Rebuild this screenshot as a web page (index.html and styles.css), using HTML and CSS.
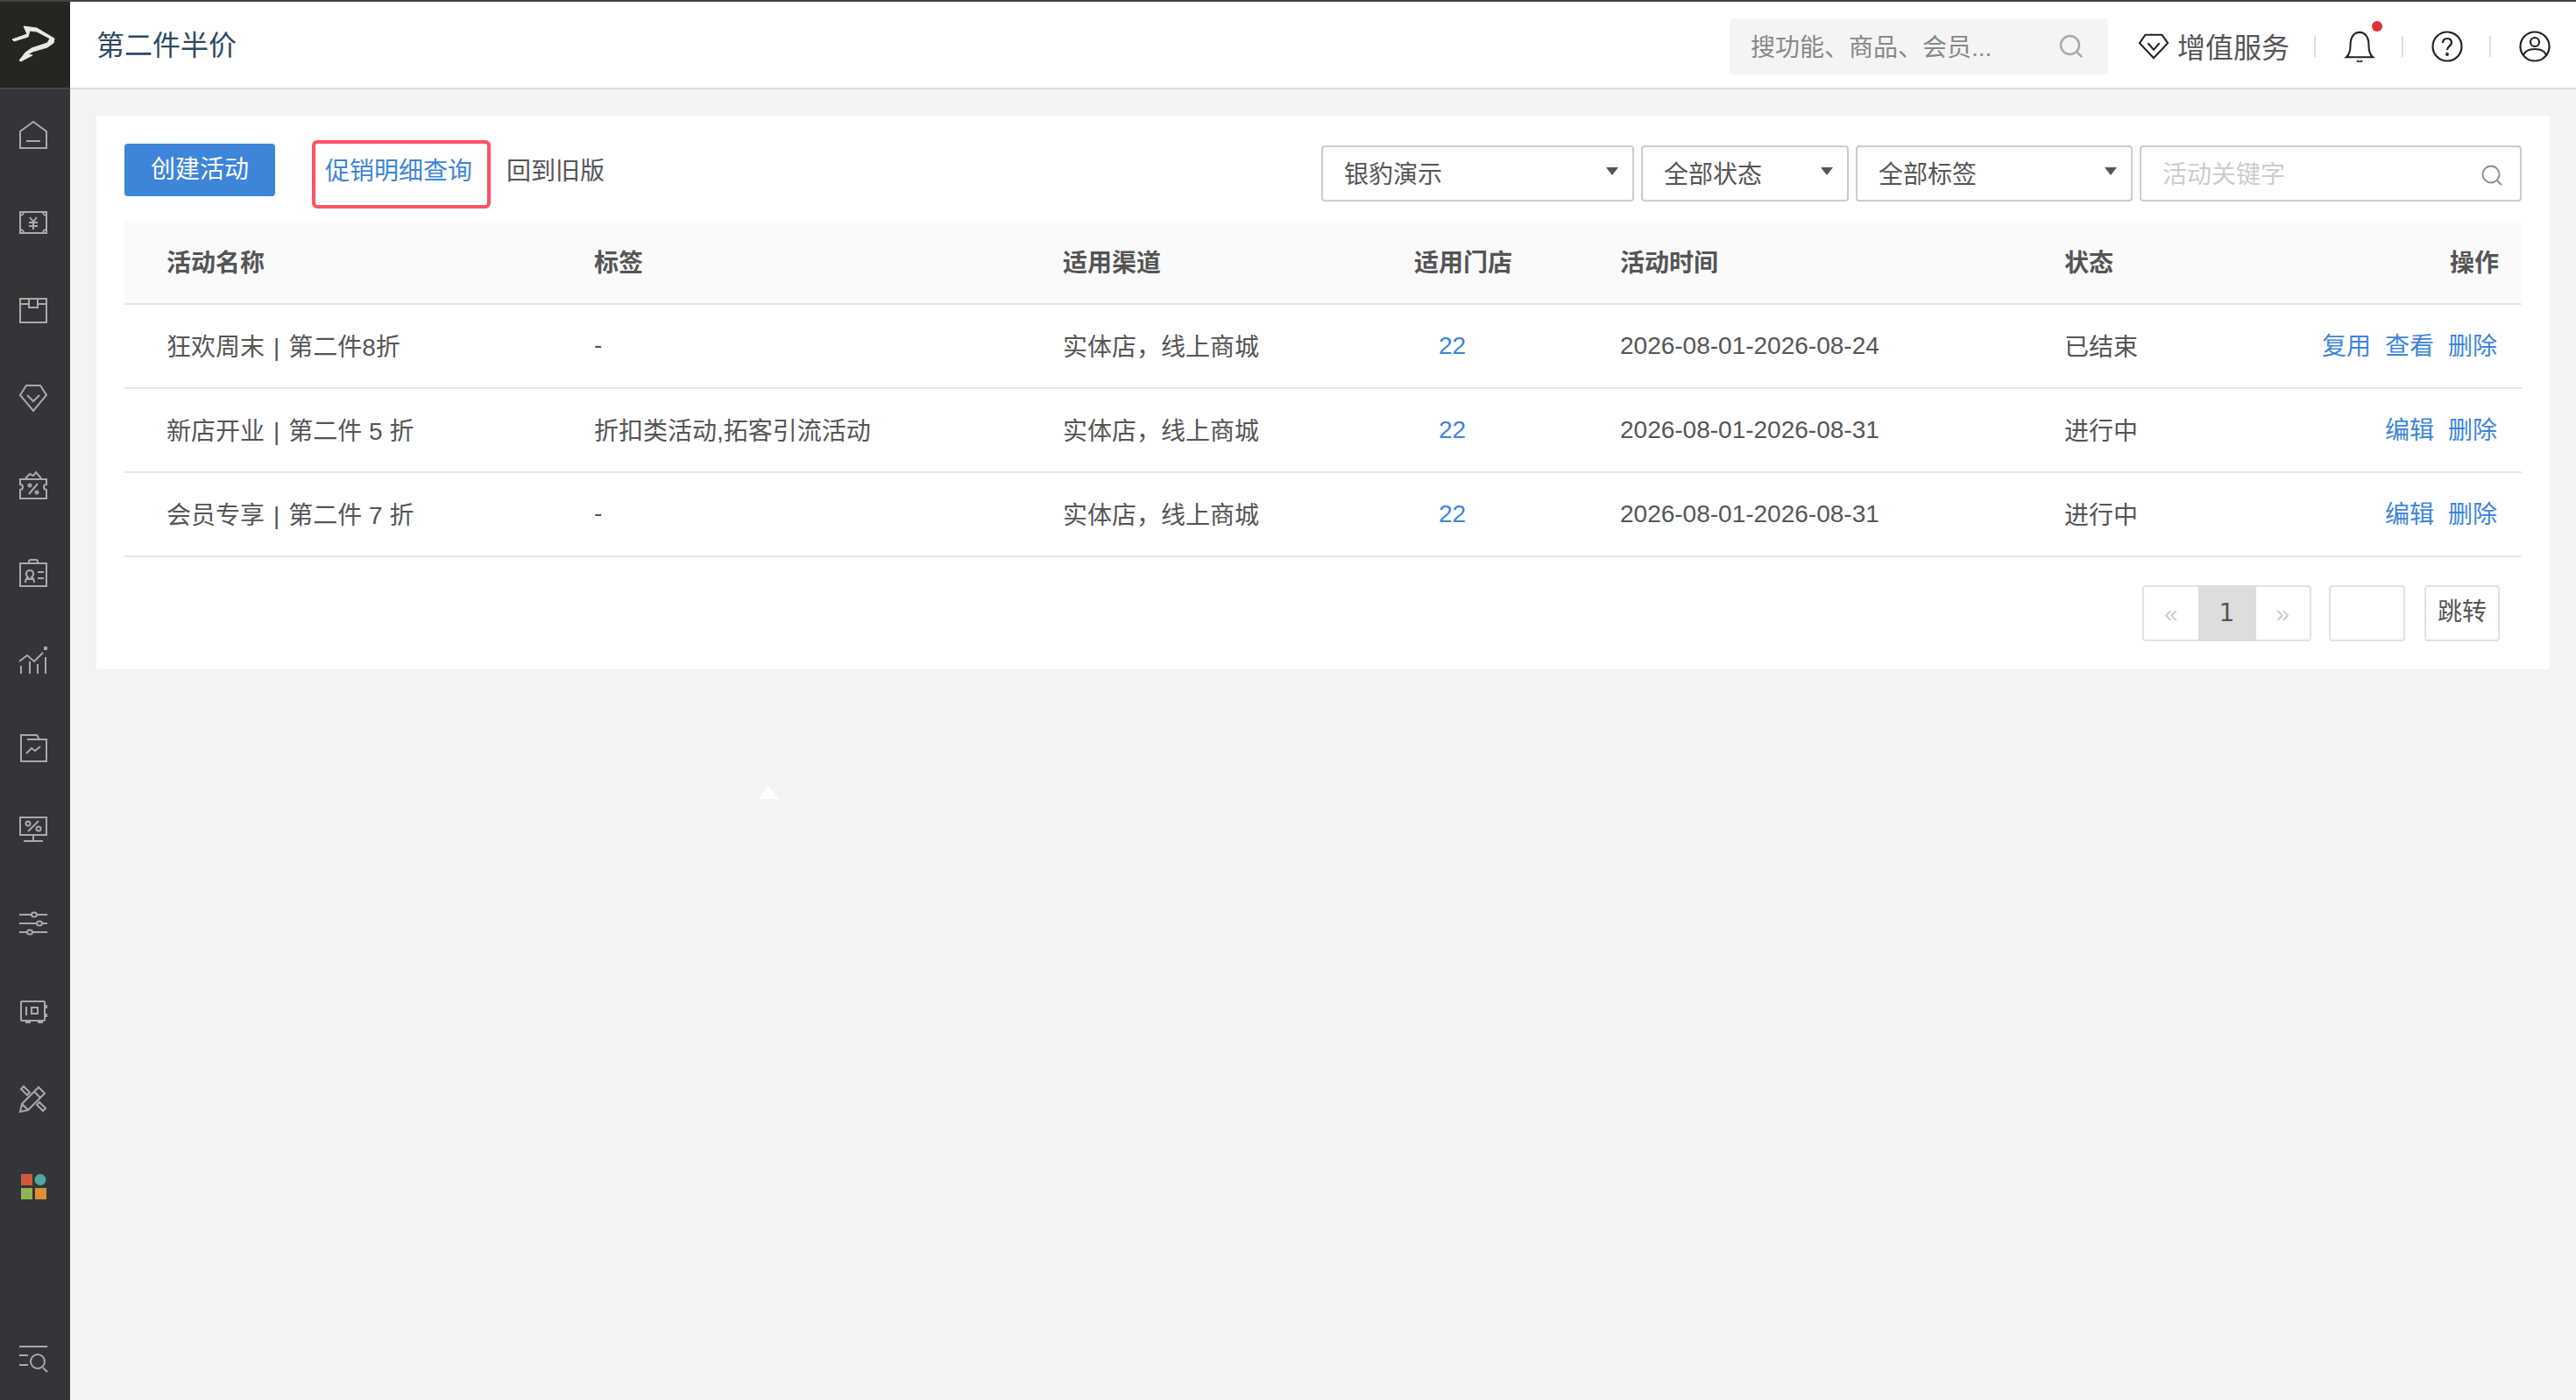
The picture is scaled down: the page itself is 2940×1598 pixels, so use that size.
FILE: index.html
```html
<!DOCTYPE html>
<html lang="zh-CN">
<head>
  <meta charset="UTF-8">
  <meta name="viewport" content="width=device-width, initial-scale=1.0">
  <title>第二件半价</title>
  <link rel="stylesheet" href="styles.css">
</head>
<body>
  <div class="app">
    <!-- left icon rail -->
    <aside class="sidebar">
      <div class="logo">
        <svg width="52" height="44" viewBox="14 32 52 44"><path d="M15 48 L32 42 L28 33 L43 35 L63 47 L62 52 L55 57 L38 62 L33 65 L38 66 L25 73 L23 72 L30 63 L37 58 L55 52 L58 47 L43 39 L35 38 L33 45 L17 50 Z" fill="#e8e8e8" stroke="#e8e8e8"/></svg>
      </div>
      <a class="nav-item"><svg class="side-ico" viewBox="0 0 32 32"><path d="M1 31V12L16 1l15 11v19zM8 23h16"/></svg></a>
      <a class="nav-item"><svg class="side-ico" viewBox="0 0 32 32"><path d="M1 4h30v24H1zM1 8a4 4 0 0 0 4-4M27 4a4 4 0 0 0 4 4M1 24a4 4 0 0 1 4 4M31 24a4 4 0 0 0-4 4"/><path d="M12 10l4 5 4-5M11 16h10M11 20h10M16 15v9"/></svg></a>
      <a class="nav-item"><svg class="side-ico" viewBox="0 0 32 32"><path d="M1 3h30v27H1zM1 9h10M21 9h10M11 3v10h10V3"/></svg></a>
      <a class="nav-item"><svg class="side-ico" viewBox="0 0 32 32"><path d="M8 2h16l7 11-15 18L1 13zM9 13l7 7 7-7"/></svg></a>
      <a class="nav-item"><svg class="side-ico" viewBox="0 0 32 32"><path d="M1 9h30v6a3 3 0 0 0 0 6v10H1V21a3 3 0 0 0 0-6zM7 8l5-5 4 2 3-4 6 7M21 14L11 26"/><circle cx="12" cy="16" r="1.5"/><circle cx="20" cy="24" r="1.5"/></svg></a>
      <a class="nav-item"><svg class="side-ico" viewBox="0 0 32 32"><path d="M1 5h30v26H1zM11 5V3a2 2 0 0 1 2-2h6a2 2 0 0 1 2 2v2zM21 15h7M21 22h7M7 27c0-4 1-5 3-6-4-3-2-8 2-8s6 5 2 8c2 1 3 2 3 6M7 23h10"/></svg></a>
      <a class="nav-item"><svg class="side-ico" viewBox="0 0 32 32"><path d="M2 31V22M12 31V17M21 31V20M30 31V12M0 17l9-7 8 7 10-10"/><rect x="28" y="0" width="4" height="4" fill="#aaa" stroke="none"/></svg></a>
      <a class="nav-item"><svg class="side-ico" viewBox="0 0 32 32"><path d="M2 1h18l3 5h8v25H2zM9 6h14M8 22l6-6 4 3 6-5"/></svg></a>
      <a class="nav-item nav-item-monitor"><svg class="side-ico" viewBox="0 0 32 32"><path d="M1 1h30v20H1zM16 21v6M5 28h22M22 5L10 17"/><circle cx="10" cy="8" r="2.5"/><circle cx="22" cy="14" r="2.5"/></svg></a>
      <a class="nav-item"><svg class="side-ico" viewBox="0 0 32 32"><path d="M0 6h14M20 6h12M0 16h20M26 16h6M0 26h9M15 26h17"/><ellipse cx="17" cy="6" rx="3" ry="2.5"/><ellipse cx="23" cy="16" rx="3" ry="2.5"/><ellipse cx="12" cy="26" rx="3" ry="2.5"/></svg></a>
      <a class="nav-item"><svg class="side-ico" viewBox="0 0 32 32"><path d="M3 5h25a1 1 0 0 1 1 1v20a1 1 0 0 1-1 1H3a1 1 0 0 1-1-1V6a1 1 0 0 1 1-1zM31 9v4M31 19v4M8 27v2h5M21 29h5v-2M8 11v10"/><rect x="14" y="12" width="7" height="7"/></svg></a>
      <a class="nav-item"><svg class="side-ico" viewBox="0 0 32 32"><path d="M1 31l2-9L22 3l7 7-19 19zM3 22l7 7M17 8l7 7M5 2L2 5l7 7 3-3zM23 20l-3 3 7 7 3-3z"/></svg></a>
      <a class="nav-item"><svg class="tiles" viewBox="0 0 32 32"><rect x="2" y="2" width="13" height="13" fill="#d0593a"/><ellipse cx="24" cy="8.5" rx="6.5" ry="6.5" fill="#4fa89c"/><rect x="2" y="18" width="13" height="13" fill="#8cb553"/><rect x="18" y="18" width="13" height="13" fill="#dd9033"/></svg></a>
      <a class="nav-item nav-item-bottom"><svg class="side-ico" viewBox="0 0 32 32"><path d="M0 2h32M0 12h10M0 23h10M27 26l5 5"/><circle cx="21" cy="19" r="8"/></svg></a>
    </aside>

    <div class="main">
      <header class="topbar">
        <div class="page-title">第二件半价</div>
        <div class="top-search">
          <span>搜功能、商品、会员...</span>
          <svg class="top-search-ico" viewBox="0 0 28 28"><circle cx="12.5" cy="12.5" r="10.5"/><path d="M20 20l6 6"/></svg>
        </div>
        <div class="vip">
          <svg class="top-ico" viewBox="0 0 38 32"><path d="M9 2h20l7 10-17 18L2 12zM12 12l7 8 7-8"/></svg>
          <span>增值服务</span>
        </div>
        <i class="sep sep-first"></i>
        <div class="bell">
          <svg class="top-ico" viewBox="0 0 36 38"><path d="M2 32c4-3 5-8 5-15 0-10 5-15 11-15s11 5 11 15c0 7 1 12 5 15zM15 36c1 2 5 2 6 0"/></svg>
          <b class="dot"></b>
        </div>
        <i class="sep"></i>
        <svg class="top-ico" viewBox="0 0 36 36"><circle cx="18" cy="18" r="16.5"/><path d="M13 14c0-3 2-5 5-5s5 2 5 5-5 4-5 8"/><circle cx="18" cy="27" r=".8"/></svg>
        <i class="sep"></i>
        <svg class="top-ico" viewBox="0 0 36 36"><circle cx="18" cy="18" r="16.5"/><circle cx="18" cy="13" r="5"/><path d="M5 28c2-6 8-7 13-7s11 1 13 7"/></svg>
      </header>

      <div class="content">
        <section class="card">
          <div class="toolbar">
            <a class="btn-primary">创建活动</a>
            <a class="link-boxed">促销明细查询</a>
            <a class="link-old">回到旧版</a>
            <div class="filters">
              <div class="select select-shop"><span>银豹演示</span><i class="caret"></i></div>
              <div class="select select-status"><span>全部状态</span><i class="caret"></i></div>
              <div class="select select-tag"><span>全部标签</span><i class="caret"></i></div>
              <div class="select select-key"><span class="placeholder">活动关键字</span>
                <svg class="key-ico" viewBox="0 0 24 24"><circle cx="11" cy="11" r="9.5"/><path d="M18 18l5 5"/></svg>
              </div>
            </div>
          </div>

          <table class="promo-table">
            <thead>
              <tr>
                <th class="col-name">活动名称</th>
                <th class="col-tag">标签</th>
                <th class="col-channel">适用渠道</th>
                <th class="col-store">适用门店</th>
                <th class="col-time">活动时间</th>
                <th class="col-status">状态</th>
                <th class="col-ops">操作</th>
              </tr>
            </thead>
            <tbody>
              <tr>
                <td>狂欢周末<span class="bar">|</span>第二件8折</td>
                <td>-</td>
                <td>实体店，线上商城</td>
                <td class="num store-num"><a>22</a></td>
                <td class="num">2026-08-01-2026-08-24</td>
                <td>已结束</td>
                <td class="ops"><a>复用</a><a>查看</a><a>删除</a></td>
              </tr>
              <tr>
                <td>新店开业<span class="bar">|</span>第二件 5 折</td>
                <td>折扣类活动,拓客引流活动</td>
                <td>实体店，线上商城</td>
                <td class="num store-num"><a>22</a></td>
                <td class="num">2026-08-01-2026-08-31</td>
                <td>进行中</td>
                <td class="ops"><a>编辑</a><a>删除</a></td>
              </tr>
              <tr>
                <td>会员专享<span class="bar">|</span>第二件 7 折</td>
                <td>-</td>
                <td>实体店，线上商城</td>
                <td class="num store-num"><a>22</a></td>
                <td class="num">2026-08-01-2026-08-31</td>
                <td>进行中</td>
                <td class="ops"><a>编辑</a><a>删除</a></td>
              </tr>
            </tbody>
          </table>

          <div class="pager">
            <div class="pages">
              <span class="page-arrow page-prev">«</span>
              <span class="page-current">1</span>
              <span class="page-arrow page-next">»</span>
            </div>
            <div class="jump-input"></div>
            <a class="jump-btn">跳转</a>
          </div>
        </section>
      </div>
    </div>
  </div>
  <div class="tip-arrow"></div>
</body>
</html>
```

FILE: styles.css
```css
* {
  box-sizing: border-box;
}
html, body {
  height: 100%;
}
body {
  margin: 0;
  background-color: #f3f3f3;
  border-top: 2px solid #444;
  color: #555;
  font-family: "Liberation Sans", "Noto Sans CJK SC", sans-serif;
  font-size: 28px;
  overflow: hidden;
}
a {
  cursor: pointer;
}
.app {
  display: flex;
  height: 100%;
}

/* sidebar */
.sidebar {
  width: 80px;
  flex: none;
  display: flex;
  flex-direction: column;
  background-color: #333538;
}
.logo {
  height: 100px;
  flex: none;
  display: flex;
  align-items: center;
  justify-content: center;
  padding-right: 2px;
  background-color: #262522;
  border-bottom: 2px solid #45474a;
  margin-bottom: 2px;
}
.nav-item {
  height: 100px;
  flex: none;
  display: flex;
  align-items: center;
  justify-content: center;
  padding-right: 4px;
}
.nav-item-monitor {
  padding-bottom: 12px;
}
.nav-item-bottom {
  margin-top: auto;
  height: 94px;
}
.side-ico {
  width: 32px;
  height: 32px;
  fill: none;
  stroke: #aaa;
  stroke-width: 2;
  overflow: visible;
}
.tiles {
  width: 32px;
  height: 32px;
}

/* header */
.main {
  flex: 1;
  display: flex;
  flex-direction: column;
  min-width: 0;
}
.topbar {
  height: 100px;
  flex: none;
  display: flex;
  align-items: center;
  padding-right: 29px;
  background-color: #fff;
  border-bottom: 2px solid #ddd;
}
.page-title {
  margin-left: 30px;
  margin-right: auto;
  padding-bottom: 4px;
  font-size: 32px;
  color: #2d4a63;
}
.top-search {
  width: 432px;
  height: 64px;
  margin-top: 4px;
  display: flex;
  align-items: center;
  justify-content: space-between;
  padding: 0 28px 3px 24px;
  background-color: #f4f4f4;
  border-radius: 4px;
  color: #888;
}
.top-search-ico {
  width: 28px;
  height: 28px;
  margin-top: 3px;
  fill: none;
  stroke: #aaa;
  stroke-width: 2.5;
}
.vip {
  display: flex;
  align-items: center;
  margin-left: 34px;
  font-size: 32px;
  margin-top: 1px;
}
.top-ico {
  width: 36px;
  height: 36px;
  margin-top: 4px;
  fill: none;
  stroke: #222;
  stroke-width: 2.2;
}
.vip .top-ico {
  margin: 3px 9px 0 0;
}
.sep {
  width: 2px;
  height: 24px;
  margin: 4px 32px 0 30px;
  background-color: #ddd;
}
.sep-first {
  margin-left: 28px;
}
.bell {
  position: relative;
  display: flex;
}
.dot {
  position: absolute;
  top: -7px;
  right: -8px;
  width: 12px;
  height: 12px;
  border-radius: 50%;
  background-color: #e03131;
}

/* main card */
.content {
  flex: 1;
  padding: 30px 30px 0;
}
.card {
  background-color: #fff;
  padding: 28px 32px 32px;
}
.toolbar {
  display: flex;
  align-items: flex-start;
  padding-bottom: 14px;
}
.btn-primary {
  width: 172px;
  height: 60px;
  margin-top: 4px;
  line-height: 60px;
  text-align: center;
  color: #fff;
  background-color: #3d85d8;
  border-radius: 4px;
}
.link-boxed {
  width: 204px;
  height: 78px;
  margin-left: 42px;
  padding-left: 11px;
  line-height: 64px;
  color: #3d85d8;
  border: 4px solid #ff5064;
  border-radius: 6px;
}
.link-old {
  margin-left: 18px;
  line-height: 72px;
}
.filters {
  margin-left: auto;
  margin-top: 6px;
  display: flex;
  gap: 8px;
}
.select {
  height: 64px;
  display: flex;
  align-items: center;
  justify-content: space-between;
  padding: 0 16px 3px 24px;
  border: 2px solid #ccc;
  border-radius: 4px;
}
.select-shop {
  width: 357px;
}
.select-status {
  width: 237px;
}
.select-tag {
  width: 316px;
}
.select-key {
  width: 436px;
  padding-right: 20px;
}
.caret {
  width: 0;
  height: 0;
  border-left: 7px solid transparent;
  border-right: 7px solid transparent;
  border-top: 9px solid #555;
  margin-bottom: 2px;
}
.placeholder {
  color: #ccc;
}
.key-ico {
  width: 24px;
  height: 24px;
  margin-top: 6px;
  fill: none;
  stroke: #888;
  stroke-width: 1.8;
}

/* table */
.promo-table {
  width: 100%;
  table-layout: fixed;
  border-collapse: separate;
  border-spacing: 0;
}
.promo-table th,
.promo-table td {
  height: 96px;
  padding: 0 0 3px 48px;
  text-align: left;
  border-bottom: 2px solid #e6e6e6;
  white-space: nowrap;
}
.promo-table th {
  background-color: #fafafa;
  font-weight: bold;
}
.promo-table .num {
  padding-bottom: 0;
}
.col-name { width: 488px; }
.col-tag { width: 535px; }
.col-channel { width: 401px; }
.col-store { width: 235px; }
.col-time { width: 507px; }
.col-status { width: 292px; }
.promo-table .col-ops {
  padding: 0 26px 3px 0;
  text-align: right;
}
.promo-table .ops {
  padding: 0 28px 5px 0;
  text-align: right;
}
.promo-table .store-num {
  padding-left: 76px;
}
.store-num a,
.ops a {
  color: #3d85d8;
}
.ops a + a {
  margin-left: 16px;
}
.bar {
  margin: 0 10px;
}

/* pagination */
.pager {
  display: flex;
  justify-content: flex-end;
  gap: 20px;
  margin-top: 32px;
  padding-right: 25px;
}
.pages {
  display: flex;
  height: 64px;
  width: 193px;
  border: 2px solid #e2e2e2;
  border-radius: 4px;
}
.page-arrow {
  flex: 1;
  text-align: center;
  line-height: 62px;
  color: #ccc;
}
.page-current {
  width: 66px;
  flex: none;
  margin: -2px 0;
  text-align: center;
  line-height: 64px;
  font-family: "DejaVu Sans", sans-serif;
  background-color: #ddd;
}
.jump-input {
  width: 87px;
  height: 64px;
  border: 2px solid #e2e2e2;
  border-radius: 4px;
}
.jump-btn {
  width: 86px;
  height: 64px;
  margin-left: 2px;
  line-height: 58px;
  text-align: center;
  border: 2px solid #e2e2e2;
  border-radius: 4px;
}

/* stray white tip left on the canvas */
.tip-arrow {
  position: absolute;
  left: 865px;
  top: 897px;
  width: 0;
  height: 0;
  border-left: 12px solid transparent;
  border-right: 12px solid transparent;
  border-bottom: 15px solid #fff;
}
```
